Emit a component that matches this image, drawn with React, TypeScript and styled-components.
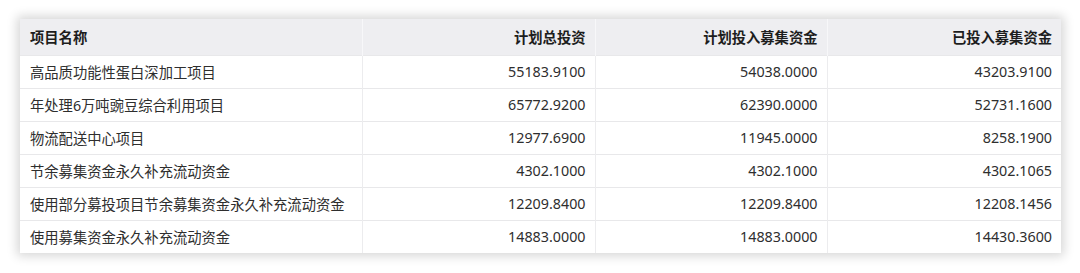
import React from "react";
import styled, { createGlobalStyle } from "styled-components";

const Global = createGlobalStyle`
  html, body { margin: 0; padding: 0; background: #ffffff; }
  body { font-family: "Noto Sans", "Noto Sans CJK SC", sans-serif; }
`;

const Page = styled.div`
  box-sizing: border-box;
  height: 273px;
  padding: 19px 19px 0 20px;
`;

const Card = styled.div`
  width: 1041px;
  background: #ffffff;
  box-shadow: 0 0 10px 3px rgba(0, 0, 0, 0.16);
`;

const Table = styled.table`
  width: 100%;
  border-collapse: collapse;
  table-layout: fixed;
`;

const HeadCell = styled.th<{ $align: "left" | "right"; $w: number }>`
  width: ${(p) => p.$w}px;
  height: 36px;
  padding: 0 9px 0 10px;
  box-sizing: border-box;
  background: #eeeef1;
  border-left: 1px solid #f7f7f9;
  text-align: ${(p) => p.$align};
  font-family: "Noto Sans CJK SC", "Noto Sans", sans-serif;
  font-weight: 700;
  font-size: 14.3px;
  color: #1d1d1d;
  &:first-child { border-left: none; }
`;

const Row = styled.tr`
  border-top: 1px solid #e8e8ea;
`;

const Cell = styled.td<{ $align: "left" | "right" }>`
  height: 33px;
  padding: 0 9px 0 10px;
  box-sizing: border-box;
  border-left: 1px solid #ececee;
  text-align: ${(p) => p.$align};
  font-family: "Noto Sans", "Noto Sans CJK SC", sans-serif;
  font-size: 14.3px;
  color: #2e2e2e;
  white-space: nowrap;
  &:first-child { border-left: none; }
`;

const columns: { title: string; w: number; align: "left" | "right" }[] = [
  { title: "项目名称", w: 342, align: "left" },
  { title: "计划总投资", w: 233, align: "right" },
  { title: "计划投入募集资金", w: 232, align: "right" },
  { title: "已投入募集资金", w: 234, align: "right" },
];

const rows: string[][] = [
  ["高品质功能性蛋白深加工项目", "55183.9100", "54038.0000", "43203.9100"],
  ["年处理6万吨豌豆综合利用项目", "65772.9200", "62390.0000", "52731.1600"],
  ["物流配送中心项目", "12977.6900", "11945.0000", "8258.1900"],
  ["节余募集资金永久补充流动资金", "4302.1000", "4302.1000", "4302.1065"],
  ["使用部分募投项目节余募集资金永久补充流动资金", "12209.8400", "12209.8400", "12208.1456"],
  ["使用募集资金永久补充流动资金", "14883.0000", "14883.0000", "14430.3600"],
];

export default function App() {
  return (
    <>
      <Global />
      <Page>
        <Card>
          <Table>
            <thead>
              <tr>
                {columns.map((c) => (
                  <HeadCell key={c.title} $align={c.align} $w={c.w}>
                    {c.title}
                  </HeadCell>
                ))}
              </tr>
            </thead>
            <tbody>
              {rows.map((r) => (
                <Row key={r[0]}>
                  {r.map((v, i) => (
                    <Cell key={i} $align={columns[i].align}>
                      {v}
                    </Cell>
                  ))}
                </Row>
              ))}
            </tbody>
          </Table>
        </Card>
      </Page>
    </>
  );
}
